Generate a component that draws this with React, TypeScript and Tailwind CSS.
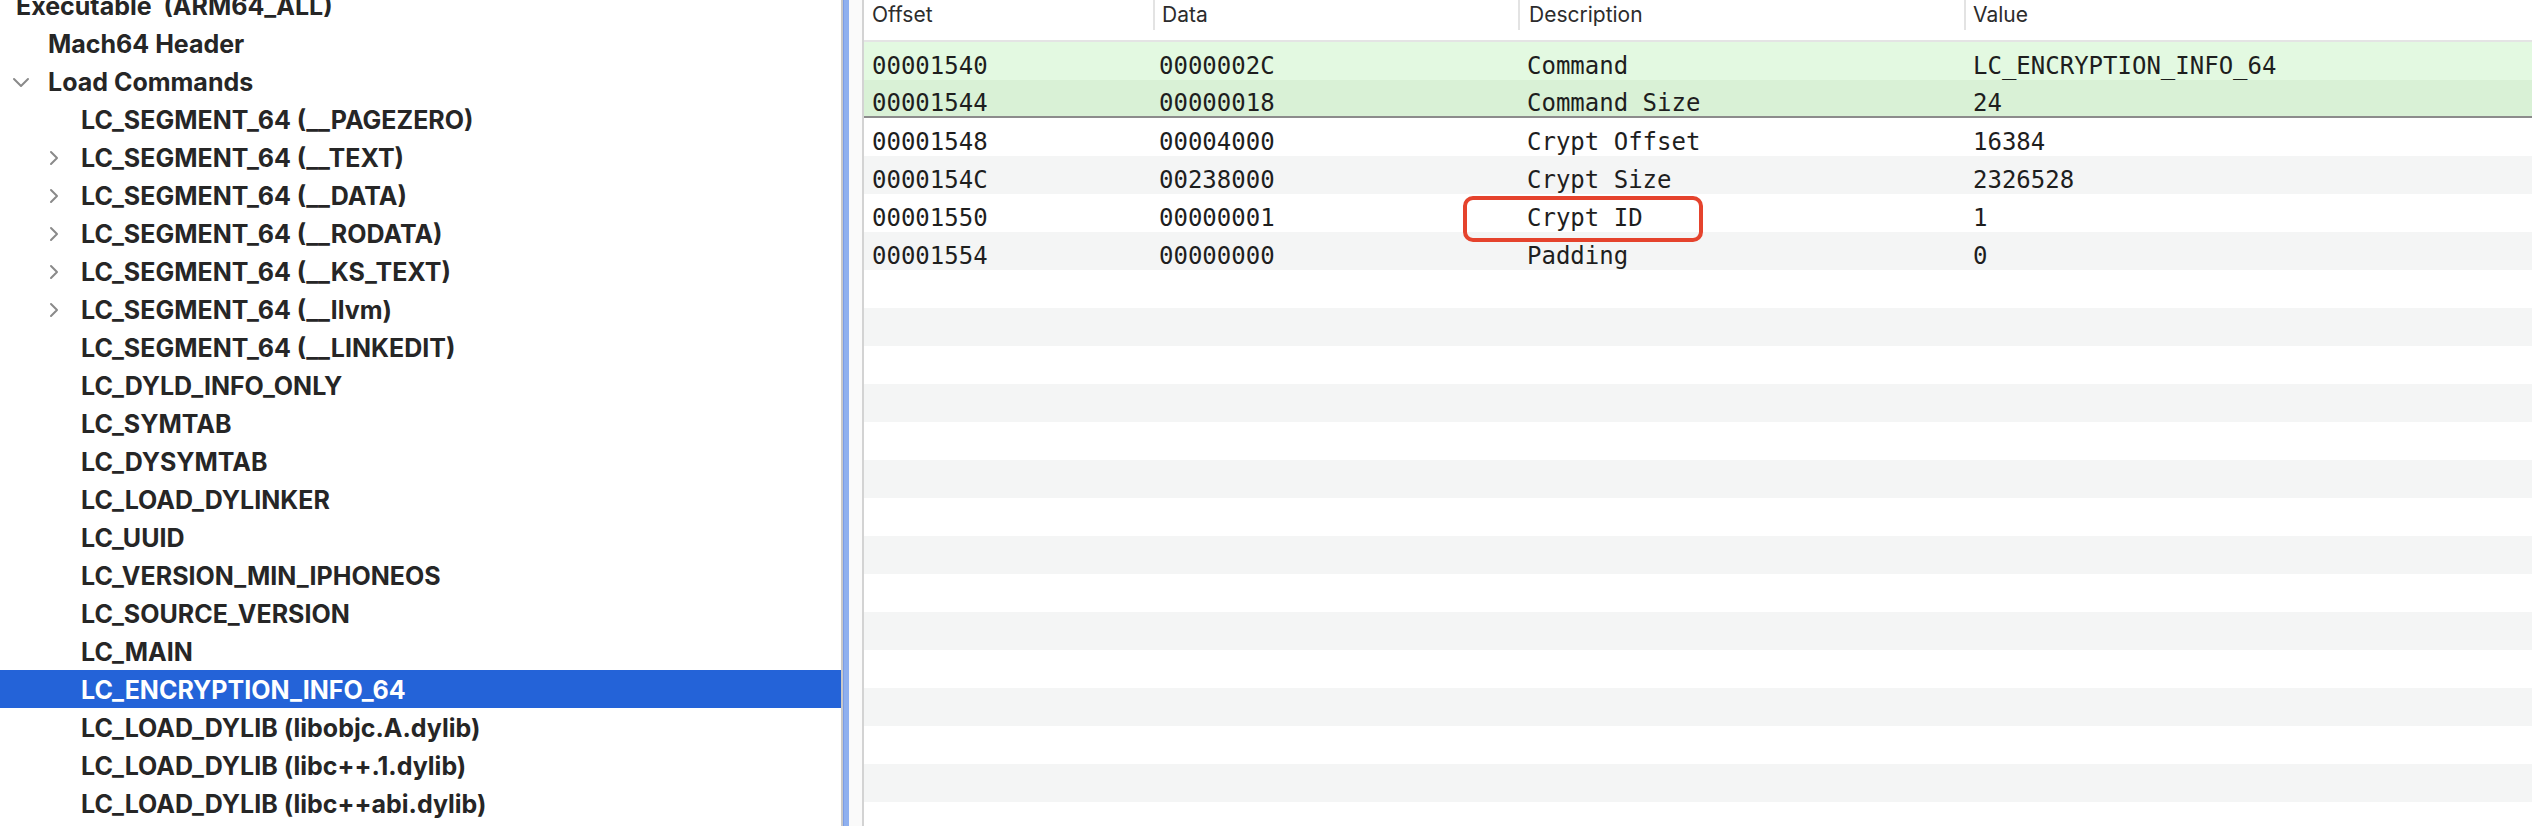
import React from 'react'

interface TreeItem {
  label: string
  level: 0 | 1 | 2
  chevron?: 'right' | 'down'
  selected?: boolean
}

const tree: TreeItem[] = [
  { label: 'Executable  (ARM64_ALL)', level: 0 },
  { label: 'Mach64 Header', level: 1 },
  { label: 'Load Commands', level: 1, chevron: 'down' },
  { label: 'LC_SEGMENT_64 (__PAGEZERO)', level: 2 },
  { label: 'LC_SEGMENT_64 (__TEXT)', level: 2, chevron: 'right' },
  { label: 'LC_SEGMENT_64 (__DATA)', level: 2, chevron: 'right' },
  { label: 'LC_SEGMENT_64 (__RODATA)', level: 2, chevron: 'right' },
  { label: 'LC_SEGMENT_64 (__KS_TEXT)', level: 2, chevron: 'right' },
  { label: 'LC_SEGMENT_64 (__llvm)', level: 2, chevron: 'right' },
  { label: 'LC_SEGMENT_64 (__LINKEDIT)', level: 2 },
  { label: 'LC_DYLD_INFO_ONLY', level: 2 },
  { label: 'LC_SYMTAB', level: 2 },
  { label: 'LC_DYSYMTAB', level: 2 },
  { label: 'LC_LOAD_DYLINKER', level: 2 },
  { label: 'LC_UUID', level: 2 },
  { label: 'LC_VERSION_MIN_IPHONEOS', level: 2 },
  { label: 'LC_SOURCE_VERSION', level: 2 },
  { label: 'LC_MAIN', level: 2 },
  { label: 'LC_ENCRYPTION_INFO_64', level: 2, selected: true },
  { label: 'LC_LOAD_DYLIB (libobjc.A.dylib)', level: 2 },
  { label: 'LC_LOAD_DYLIB (libc++.1.dylib)', level: 2 },
  { label: 'LC_LOAD_DYLIB (libc++abi.dylib)', level: 2 },
]

const rows = [
  ['00001540', '0000002C', 'Command', 'LC_ENCRYPTION_INFO_64'],
  ['00001544', '00000018', 'Command Size', '24'],
  ['00001548', '00004000', 'Crypt Offset', '16384'],
  ['0000154C', '00238000', 'Crypt Size', '2326528'],
  ['00001550', '00000001', 'Crypt ID', '1'],
  ['00001554', '00000000', 'Padding', '0'],
]

const EMPTY_ROWS = 15

function ChevronRight() {
  return (
    <svg width="12" height="16" viewBox="0 0 12 16" fill="none">
      <path d="M3 2 L9 8 L3 14" stroke="#8a8a8a" strokeWidth="2" strokeLinecap="round" strokeLinejoin="round" />
    </svg>
  )
}

function ChevronDown() {
  return (
    <svg width="18" height="11" viewBox="0 0 18 11" fill="none">
      <path d="M2 2 L9 9 L16 2" stroke="#8a8a8a" strokeWidth="2" strokeLinecap="round" strokeLinejoin="round" />
    </svg>
  )
}

function TreeRow({ item }: { item: TreeItem }) {
  const textPad = item.level === 0 ? 'pl-[16px]' : item.level === 1 ? 'pl-[48px]' : 'pl-[81px]'
  return (
    <div
      className={`relative h-[38px] flex items-center pt-[3px] ${textPad} ${
        item.selected ? 'bg-[#2463d8] text-white' : 'text-[#262626]'
      }`}
    >
      {item.chevron === 'down' && (
        <span className="absolute left-[12px] top-[15px]">
          <ChevronDown />
        </span>
      )}
      {item.chevron === 'right' && (
        <span className="absolute left-[48px] top-[12px]">
          <ChevronRight />
        </span>
      )}
      <span className="whitespace-pre font-bold text-[25px] leading-none">{item.label}</span>
    </div>
  )
}

export default function App() {
  return (
    <div
      className="w-[2532px] h-[826px] flex overflow-hidden bg-white"
      style={{ fontFamily: 'Inter, "Liberation Sans", sans-serif' }}
    >
      {/* Tree */}
      <div className="w-[841px] shrink-0 overflow-hidden">
        <div className="-mt-[14px]">
          {tree.map((item, i) => (
            <TreeRow key={i} item={item} />
          ))}
        </div>
      </div>

      {/* Split divider */}
      <div className="w-[2px] shrink-0 bg-[#c9c9c9]" />
      <div className="w-[6px] shrink-0 bg-[#8fb0ef] border-l border-[#7b9de6]" />
      <div className="w-[13px] shrink-0 bg-[#fafafa]" />
      <div className="w-[2px] shrink-0 bg-[#d3d3d3]" />

      {/* Table */}
      <div className="relative flex-1 min-w-0 overflow-hidden">
        <div className="h-[42px] border-b-2 border-[#e4e4e4] bg-white">
          <div className="h-[30px] flex items-center text-[21px] text-[#2c2c2c]">
            <div className="w-[289px] pl-[8px]">Offset</div>
            <div className="w-[365px] h-full flex items-center pl-[7px] border-l-2 border-[#e3e3e3]">Data</div>
            <div className="w-[446px] h-full flex items-center pl-[9px] border-l-2 border-[#e3e3e3]">Description</div>
            <div className="flex-1 h-full flex items-center pl-[7px] border-l-2 border-[#e3e3e3]">Value</div>
          </div>
        </div>

        <div style={{ fontFamily: '"DejaVu Sans Mono", "Liberation Mono", monospace' }}>
          {rows.map((r, i) => (
            <div
              key={i}
              className={`h-[38px] flex items-center pt-[10px] text-[24px] text-[#1e1e1e] ${
                i === 0
                  ? 'bg-[#e3f9e1]'
                  : i === 1
                    ? 'bg-[#d9f1d6] border-b-2 border-[#8c8c8c]'
                    : i % 2 === 1
                      ? 'bg-[#f4f5f5]'
                      : 'bg-white'
              }`}
            >
              <div className="w-[289px] pl-[8px] whitespace-pre">{r[0]}</div>
              <div className="w-[365px] pl-[6px] whitespace-pre">{r[1]}</div>
              <div className="w-[446px] pl-[9px] whitespace-pre">{r[2]}</div>
              <div className="flex-1 pl-[9px] whitespace-pre">{r[3]}</div>
            </div>
          ))}
          {Array.from({ length: EMPTY_ROWS }).map((_, i) => (
            <div key={i} className={`h-[38px] ${(i + rows.length) % 2 === 1 ? 'bg-[#f4f5f5]' : 'bg-white'}`} />
          ))}
        </div>

        {/* Annotation around "Crypt ID" */}
        <div className="absolute left-[599px] top-[196px] w-[240px] h-[46px] border-[4px] border-[#e5432d] rounded-[10px]" />
      </div>
    </div>
  )
}
